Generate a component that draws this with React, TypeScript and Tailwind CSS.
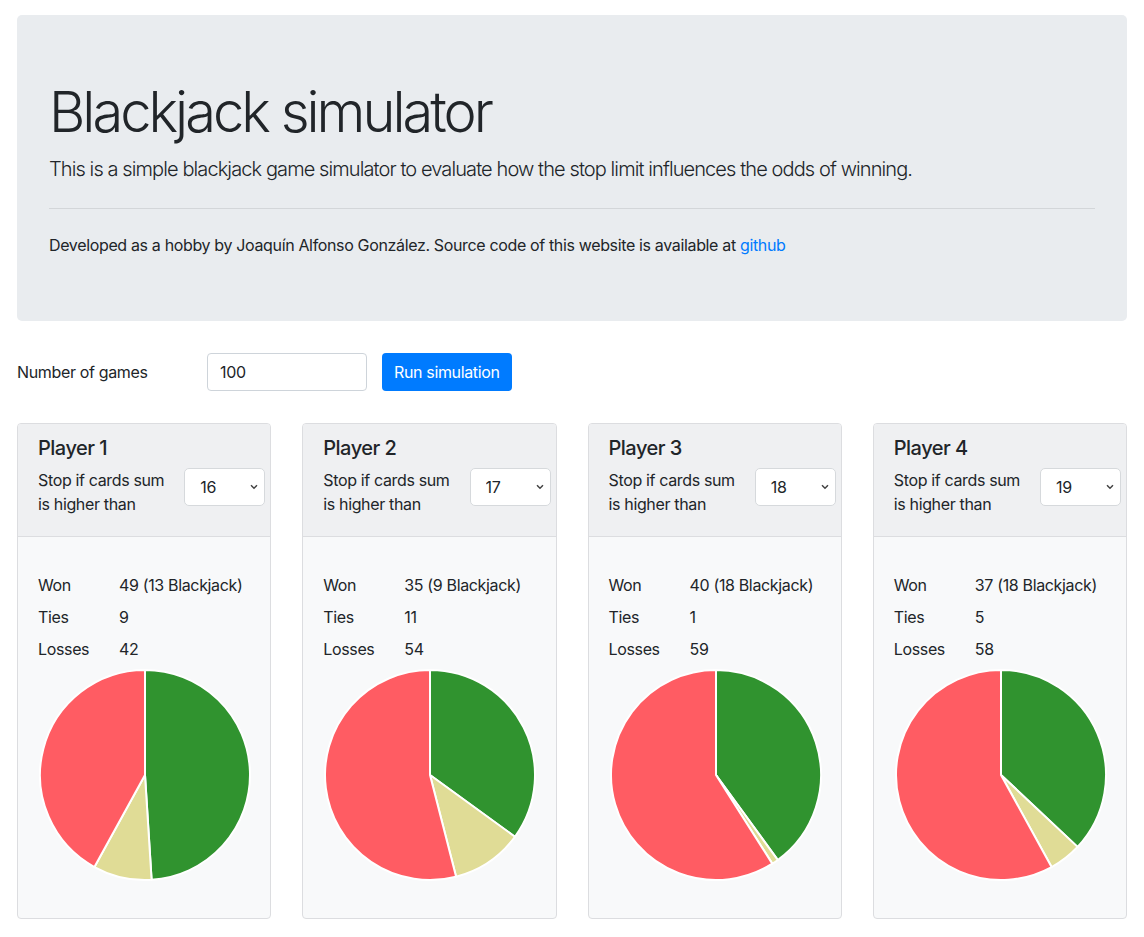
import { useState } from "react";

type Result = { won: number; blackjack: number; ties: number; losses: number };

const players: { name: string; limit: number; result: Result }[] = [
  { name: "Player 1", limit: 16, result: { won: 49, blackjack: 13, ties: 9, losses: 42 } },
  { name: "Player 2", limit: 17, result: { won: 35, blackjack: 9, ties: 11, losses: 54 } },
  { name: "Player 3", limit: 18, result: { won: 40, blackjack: 18, ties: 1, losses: 59 } },
  { name: "Player 4", limit: 19, result: { won: 37, blackjack: 18, ties: 5, losses: 58 } },
];

const limits = [12, 13, 14, 15, 16, 17, 18, 19, 20, 21];

// pie slice path, angles in fraction of the full turn starting at 12 o'clock
function slice(cx: number, cy: number, r: number, from: number, to: number) {
  const a0 = from * 2 * Math.PI;
  const a1 = to * 2 * Math.PI;
  const x0 = cx + r * Math.sin(a0);
  const y0 = cy - r * Math.cos(a0);
  const x1 = cx + r * Math.sin(a1);
  const y1 = cy - r * Math.cos(a1);
  const large = to - from > 0.5 ? 1 : 0;
  return `M ${cx} ${cy} L ${x0} ${y0} A ${r} ${r} 0 ${large} 1 ${x1} ${y1} Z`;
}

function Pie({ result }: { result: Result }) {
  const total = result.won + result.ties + result.losses;
  const parts = [
    { value: result.won, color: "#30932f" },
    { value: result.ties, color: "#e0dc96" },
    { value: result.losses, color: "#ff5c63" },
  ];
  let acc = 0;
  return (
    <svg width="214" height="214" viewBox="0 0 214 214" className="shrink-0">
      {parts.map((p, i) => {
        const from = acc / total;
        acc += p.value;
        const to = acc / total;
        return (
          <path
            key={i}
            d={slice(107, 107, 105, from, to)}
            fill={p.color}
            stroke="#ffffff"
            strokeWidth="2"
            strokeLinejoin="round"
          />
        );
      })}
    </svg>
  );
}

function PlayerCard({ name, limit, result }: { name: string; limit: number; result: Result }) {
  const [stop, setStop] = useState(limit);
  return (
    <div className="border border-[#dcdde0] rounded-[4px] overflow-hidden bg-[#f8f9fa]">
      <div className="bg-[#eff0f2] border-b border-[#dcdde0] pl-5 pr-[5px] pt-3 pb-5">
        <h5 className="text-[20px] leading-6 font-medium tracking-[-0.5px] mb-2">{name}</h5>
        <div className="flex items-start justify-between">
          <div className="text-base leading-6 w-[132px]">Stop if cards sum is higher than</div>
          <div className="relative w-[81px] h-[38px]">
            <select
              value={stop}
              onChange={(e) => setStop(Number(e.target.value))}
              className="appearance-none w-full h-full bg-white border border-[#d6d9dc] rounded-[5px] pl-[15px] text-base text-[#212529] outline-none"
            >
              {limits.map((l) => (
                <option key={l} value={l}>
                  {l}
                </option>
              ))}
            </select>
            <svg
              className="absolute right-[7px] top-[16px] pointer-events-none"
              width="8"
              height="6"
              viewBox="0 0 8 6"
            >
              <path d="M1 1.2 L4 4.2 L7 1.2" fill="none" stroke="#444" strokeWidth="1.5" />
            </svg>
          </div>
        </div>
      </div>
      <div className="pl-5 pt-9 pb-9">
        <div className="grid grid-cols-[81px_1fr] gap-y-2 text-base leading-6">
          <div>Won</div>
          <div>
            {result.won} ({result.blackjack} Blackjack)
          </div>
          <div>Ties</div>
          <div>{result.ties}</div>
          <div>Losses</div>
          <div>{result.losses}</div>
        </div>
        <div className="mt-[7px] flex">
          <Pie result={result} />
        </div>
      </div>
    </div>
  );
}

export default function App() {
  const [games, setGames] = useState("100");
  return (
    <div
      className="bg-white text-[#212529] px-[17px] pt-[15px] pb-4 min-h-screen tracking-[-0.35px]"
      style={{ fontFamily: "Inter, 'Liberation Sans', sans-serif" }}
    >
      <div className="bg-[#e9ecef] rounded-[5px] px-8 pt-16 pb-16">
        <h1 className="text-[56px] leading-[67px] font-light tracking-[-3px] mb-2">Blackjack simulator</h1>
        <p className="text-[20px] leading-[30px] font-light tracking-[-0.9px]">
          This is a simple blackjack game simulator to evaluate how the stop limit influences the odds of winning.
        </p>
        <hr className="my-6 border-0 border-t border-[#d3d6d9]" />
        <p className="text-base leading-6">
          Developed as a hobby by Joaquín Alfonso González. Source code of this website is available at{" "}
          <a href="#" className="text-[#007bff]">
            github
          </a>
        </p>
      </div>

      <div className="flex items-center mt-8">
        <label className="w-[190px] text-base">Number of games</label>
        <input
          value={games}
          onChange={(e) => setGames(e.target.value)}
          className="w-[160px] h-[38px] border border-[#ced4da] rounded-[4px] px-3 text-base outline-none bg-white"
        />
        <button className="ml-[15px] h-[38px] px-3 rounded-[4px] bg-[#007bff] text-white text-base">
          Run simulation
        </button>
      </div>

      <div className="grid grid-cols-4 gap-[31px] mt-8">
        {players.map((p) => (
          <PlayerCard key={p.name} name={p.name} limit={p.limit} result={p.result} />
        ))}
      </div>
    </div>
  );
}
